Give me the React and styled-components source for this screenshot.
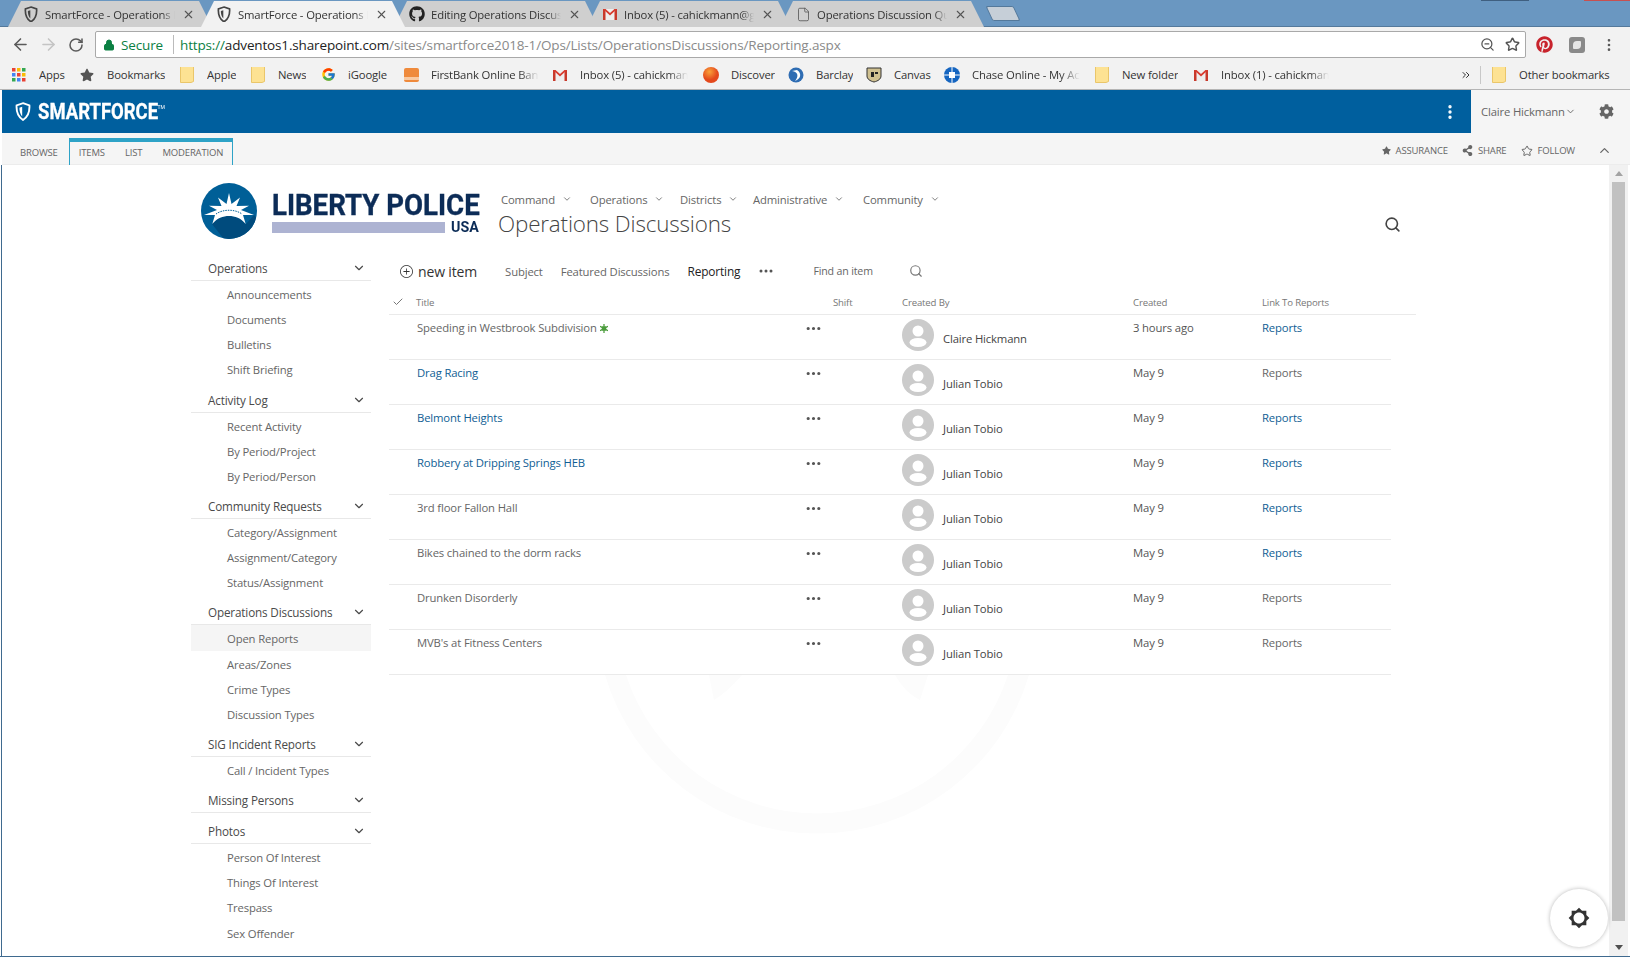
import React from 'react';
import styled, { createGlobalStyle } from 'styled-components';
import { ArrowLeft, ArrowRight, RotateCw, Star, ZoomOut, MoreVertical, Search, ChevronDown, ChevronUp, Check, Lock, X, ChevronsRight, File } from 'lucide-react';
import { FaCog, FaStar, FaPinterest, FaGithub, FaShareAlt } from 'react-icons/fa';
import { FcGoogle } from 'react-icons/fc';
import { BsThreeDots, BsPlusCircle } from 'react-icons/bs';

const UI = '"Open Sans", "Noto Sans", sans-serif';

const Global = createGlobalStyle`
	html, body { margin: 0; padding: 0; background: #fff; }
	body { font-family: ${UI}; letter-spacing: -0.15px; overflow: hidden; }
	* { box-sizing: border-box; }
`;

const Page = styled.div`
	width: 1630px;
	height: 957px;
	display: flex;
	flex-direction: column;
	overflow: hidden;
	position: relative;
	border-bottom: 1px solid #3f6a8f;
`;

/* browser chrome */
const TabStrip = styled.div`
	height: 27px;
	flex: none;
	background: #6a97c1;
	display: flex;
	align-items: flex-end;
	padding-left: 8px;
	border-bottom: 1px solid #54799b;
	position: relative;
`;
const Tab = styled.div`
	width: 204px;
	height: 26px;
	margin-left: -11px;
	&:first-child { margin-left: 0; }
	flex: none;
	display: flex;
	align-items: center;
	padding: 0 0 0 15px;
	position: relative;
	z-index: ${p => (p.$active ? 2 : 1)};
	background: ${p => (p.$active ? '#f2f2f2' : '#cfcfcf')};
	clip-path: polygon(13px 0, calc(100% - 13px) 0, 100% 100%, 0 100%);
	color: #333;
	margin-bottom: -1px;
`;
const TabIcon = styled.span`
	width: 16px;
	height: 16px;
	flex: none;
	display: flex;
	align-items: center;
	justify-content: center;
`;
const TabTitle = styled.span`
	width: 130px;
	margin-left: 6px;
	font-size: 11.3px;
	white-space: nowrap;
	overflow: hidden;
	-webkit-mask-image: linear-gradient(to right, #000 90%, transparent);
	mask-image: linear-gradient(to right, #000 90%, transparent);
`;
const TabClose = styled(X)`
	margin-left: 7px;
	color: #555;
	flex: none;
`;
const NewTab = styled.div`
	width: 28px;
	height: 15px;
	margin: 0 0 5px 5px;
	background: #c6cfd8;
	border: 1px solid #54799b;
	border-radius: 2px;
	transform: skewX(25deg);
	flex: none;
`;
const WindowEdge = styled.div`
	position: absolute;
	top: 0;
	left: ${p => p.$left}px;
	width: ${p => p.$w}px;
	height: 1px;
	background: ${p => p.$color};
`;
const Toolbar = styled.div`
	height: 35px;
	flex: none;
	background: #f2f2f2;
	display: flex;
	align-items: center;
	padding-left: 6px;
	color: #5a5a5a;
`;
const NavButton = styled.span`
	width: 28px;
	display: flex;
	justify-content: center;
	color: ${p => (p.$off ? '#c4c4c4' : '#5a5a5a')};
`;
const AddressBar = styled.div`
	width: 1431px;
	height: 27px;
	margin-left: 5px;
	background: #fff;
	border: 1px solid #a9a9a9;
	border-radius: 2px;
	display: flex;
	align-items: center;
	padding: 0 5px 0 7px;
	font-size: 13.5px;
`;
const Secure = styled.span`
	display: flex;
	align-items: center;
	gap: 6px;
	color: #0b8043;
	width: 71px;
	border-right: 1px solid #bbb;
	height: 19px;
	flex: none;
`;
const Url = styled.span`
	margin-left: 6px;
	color: #8a8a8a;
	flex: 1;
	white-space: nowrap;
	b { font-weight: 400; color: #222; }
	i { font-style: normal; color: #0b8043; }
`;
const AddressIcons = styled.span`
	display: flex;
	gap: 10px;
	align-items: center;
	color: #555;
`;
const ExtIcons = styled.div`
	display: flex;
	align-items: center;
	margin-left: 10px;
	gap: 16px;
`;
const ExtBadge = styled.span`
	width: 16px;
	height: 16px;
	border-radius: 3px;
	background: #8a8a8a;
	display: flex;
	align-items: center;
	justify-content: center;
	&::after {
		content: '';
		width: 8px;
		height: 8px;
		background: #e6e6e6;
		border-radius: 4px 1px 4px 1px;
	}
`;
const Bookmarks = styled.div`
	height: 28px;
	flex: none;
	background: #f2f2f2;
	border-bottom: 1px solid #b5b5b5;
	display: flex;
	align-items: center;
	padding: 0 0 2px 11px;
	font-size: 11.3px;
	color: #333;
	position: relative;
`;
const Bookmark = styled.div`
	width: ${p => p.$w}px;
	flex: none;
	display: flex;
	align-items: center;
	gap: 12px;
	white-space: nowrap;
	overflow: hidden;
`;
const BookmarkIcon = styled.span`
	width: 16px;
	height: 16px;
	flex: none;
	display: flex;
	align-items: center;
	justify-content: center;
`;
const BookmarkLabel = styled.span`
	max-width: ${p => p.$max || 200}px;
	overflow: hidden;
	${p => p.$fade && `
		-webkit-mask-image: linear-gradient(to right, #000 82%, transparent);
		mask-image: linear-gradient(to right, #000 82%, transparent);
	`}
`;
const OtherBookmarks = styled.div`
	margin-left: auto;
	display: flex;
	align-items: center;
	padding-right: 18px;
`;
const Divider = styled.span`
	width: 1px;
	height: 18px;
	background: #c8c8c8;
	margin: 0 10px 0 8px;
`;

/* sharepoint suite bar */
const SuiteBar = styled.div`
	height: 43px;
	flex: none;
	display: flex;
	margin-left: 2px;
	background: #005f9e;
`;
const Brand = styled.div`
	flex: 1;
	display: flex;
	align-items: center;
	padding-left: 13px;
	gap: 7px;
	color: #fff;
`;
const BrandName = styled.span`
	font-family: "Roboto", sans-serif;
	font-weight: 700;
	font-size: 22px;
	letter-spacing: 0;
	-webkit-text-stroke: 0.3px #fff;
	transform: scaleX(0.84);
	transform-origin: left center;
	position: relative;
	sup { font-size: 6px; position: absolute; top: 4px; right: -8px; font-weight: 400; -webkit-text-stroke: 0; }
`;
const SuiteDots = styled.span`
	width: 42px;
	display: flex;
	align-items: center;
	justify-content: center;
	color: #fff;
`;
const SuiteBrandArea = styled.div`
	display: flex;
	flex: 1;
	align-items: center;
`;
const UserArea = styled.div`
	width: 159px;
	background: #f5f5f5;
	display: flex;
	align-items: center;
	padding-left: 10px;
	font-size: 11.3px;
	color: #666;
`;
const UserGear = styled(FaCog)`
	margin-left: 23px;
	color: #666;
`;

const Ribbon = styled.div`
	height: 32px;
	flex: none;
	background: #f5f5f5;
	border-bottom: 1px solid #ececec;
	margin-left: 2px;
	display: flex;
	align-items: flex-end;
	padding-left: 18px;
	font-size: 9.5px;
	color: #666;
`;
const RibbonLabel = styled.span`
	text-transform: uppercase;
	height: 27px;
	padding-top: 3px;
	display: flex;
	align-items: center;
	margin-right: ${p => p.$mr || 0}px;
`;
const RibbonActive = styled.div`
	display: flex;
	height: 27px;
	padding: 0 9px;
	margin: 0 0 -1px 11px;
	border: 1px solid #2ea3c7;
	border-top: 4px solid #2ea3c7;
	border-bottom: 0;
	span { height: 20px; padding-top: 0; }
`;
const RibbonRight = styled.div`
	margin-left: auto;
	display: flex;
	align-items: center;
	height: 100%;
	padding: 4px 18px 0 0;
`;
const RibbonAction = styled.span`
	display: flex;
	align-items: center;
	gap: 5px;
	margin-right: 14px;
	text-transform: uppercase;
	color: #666;
`;
const RibbonCollapse = styled(ChevronUp)`
	margin-left: 8px;
`;

/* page body */
const Body = styled.div`
	flex: 1;
	display: flex;
	min-height: 0;
	margin-left: 1px;
	border-left: 1px solid #3f6a8f;
`;
const Content = styled.div`
	flex: 1;
	padding-left: 189px;
	position: relative;
	overflow: hidden;
`;
const SiteHeader = styled.div`
	height: 85px;
	display: flex;
	padding-top: 18px;
`;
const LibertyLogo = styled.div`
	width: 305px;
	height: 56px;
	margin-left: 10px;
	display: flex;
	align-items: center;
	gap: 15px;
	flex: none;
	margin-right: -8px;
`;
const LogoText = styled.div`
	font-family: "Roboto", sans-serif;
	font-weight: 700;
	color: #0c2c57;
	width: 207px;
	letter-spacing: 0;
`;
const LogoName = styled.div`
	font-size: 30px;
	line-height: 32px;
	white-space: nowrap;
	width: 225px;
	-webkit-text-stroke: 0.4px #0c2c57;
	transform: scaleX(0.92);
	transform-origin: left center;
`;
const LogoLower = styled.div`
	display: flex;
	align-items: center;
	gap: 6px;
	font-size: 15px;
	line-height: 13px;
`;
const LogoBar = styled.span`
	flex: 1;
	height: 11px;
	background: #adb3d2;
`;
const LogoUsa = styled.span`
	width: 28px;
	transform: scaleX(0.95);
	transform-origin: left center;
`;
const SiteTitles = styled.div`
	flex: 1;
	padding-top: 6px;
`;
const TopNav = styled.div`
	display: flex;
	height: 20px;
	padding-left: 3px;
	align-items: center;
	font-size: 11.3px;
	color: #666;
`;
const TopNavItem = styled.span`
	width: ${p => p.$w}px;
	display: flex;
	align-items: center;
	gap: 7px;
`;
const PageTitle = styled.h1`
	margin: 0;
	font-size: 22.4px;
	font-weight: 300;
	line-height: 30px;
	color: #444;
`;
const SiteSearch = styled(Search)`
	margin: 33px 208px 0 0;
	color: #444;
	flex: none;
`;
const Columns = styled.div`
	display: flex;
`;
const Sidebar = styled.nav`
	width: 180px;
	flex: none;
	font-size: 11.3px;
	color: #666;
`;
const GroupHeader = styled.div`
	height: 31px;
	border-bottom: 1px solid #e8e8e8;
	display: flex;
	align-items: center;
	justify-content: space-between;
	padding: 6px 5px 0 17px;
	font-size: 11.7px;
	font-weight: 500;
	color: #4a4a4a;
`;
const NavItem = styled.div`
	height: 25.15px;
	padding: 2px 0 0 36px;
	display: flex;
	align-items: center;
	background: ${p => (p.$selected ? '#f5f5f5' : 'transparent')};
`;
const Main = styled.main`
	margin-left: 18px;
	width: 1027px;
	position: relative;
`;
const ListToolbar = styled.div`
	height: 40px;
	padding-top: 2px;
	display: flex;
	align-items: center;
	font-size: 11.3px;
	color: #666;
`;
const NewItem = styled.span`
	display: flex;
	align-items: center;
	gap: 5px;
	font-size: 14px;
	font-weight: 500;
	color: #333;
	margin: 0 28px 0 11px;
`;
const ViewLink = styled.span`
	margin-right: ${p => (p.$current ? 19 : 18)}px;
	font-size: ${p => (p.$current ? 11.9 : 11.3)}px;
	font-weight: ${p => (p.$current ? 500 : 400)};
	color: ${p => (p.$current ? '#222' : '#666')};
`;
const MoreViews = styled(BsThreeDots)`
	color: #555;
	margin: 0 39px 0 -1px;
`;
const FindItem = styled.span`
	font-size: 10.6px;
	width: 96px;
`;
const FindIcon = styled(Search)`
	color: #777;
`;
const TableHeader = styled.div`
	display: grid;
	grid-template-columns: 27px 387px 30px 69px 231px 129px 129px 25px;
	height: 25px;
	align-items: center;
	border-bottom: 1px solid #eaeaea;
	font-size: 9.6px;
	color: #777;
`;
const Row = styled.div`
	display: grid;
	grid-template-columns: 27px 387px 30px 69px 231px 129px 129px;
	width: 1002px;
	height: 45px;
	padding-top: 4px;
	border-bottom: 1px solid #eaeaea;
	font-size: 11.3px;
	line-height: 17px;
	color: #666;
	background: #fff;
`;
const RowTitle = styled.span`
	grid-column: 2;
	padding-left: 1px;
	color: ${p => (p.$link ? '#0f5e94' : '#666')};
	display: flex;
	align-items: flex-start;
	gap: 3px;
`;
const RowDots = styled.span`
	grid-column: 3;
	margin-left: 2px;
	color: #555;
	display: flex;
	height: 19px;
	align-items: center;
`;
const Person = styled.span`
	grid-column: 5;
	display: flex;
	gap: 9px;
	color: #444;
`;
const PersonName = styled.span`
	padding-top: 11px;
`;
const CreatedCell = styled.span`
	color: #555;
`;
const ReportLink = styled.span`
	color: ${p => (p.$link ? '#0f5e94' : '#666')};
`;
const Watermark = styled.svg`
	position: absolute;
	left: 602px;
	top: 510px;
	width: 426px;
	height: 160px;
`;
const FloatButton = styled.div`
	position: absolute;
	right: 22px;
	bottom: 9px;
	width: 58px;
	height: 58px;
	border-radius: 50%;
	background: #fff;
	box-shadow: 0 0 4px rgba(0, 0, 0, 0.28);
	display: flex;
	align-items: center;
	justify-content: center;
	z-index: 5;
`;
const Scrollbar = styled.div`
	width: 21px;
	flex: none;
	background: #f1f1f1;
	display: flex;
	flex-direction: column;
	align-items: center;
	border-right: 2px solid #fff;
`;
const ScrollArrow = styled.span`
	height: 17px;
	flex: none;
	display: flex;
	align-items: center;
	&::after {
		content: '';
		border-left: 4px solid transparent;
		border-right: 4px solid transparent;
		${p => (p.$up ? 'border-bottom: 5px solid #a3a3a3;' : 'border-top: 5px solid #505050;')}
	}
`;
const ScrollThumb = styled.span`
	width: 13px;
	height: 739px;
	background: #c1c1c1;
	margin-bottom: auto;
`;

function Shield({ size = 14, color = '#fff' }) {
	return (
		<svg width={size} height={size * 1.2} viewBox="0 0 20 24">
			<path d="M10 1.500 L18 4.200 C18.500 12 16.500 18.500 10 22.500 C3.500 18.500 1.500 12 2 4.200 Z" fill="none" stroke={color} strokeWidth="2.400" />
			<path d="M9 6 L9 18 C6.500 15.500 5.500 11.500 5.500 7.200 Z" fill={color} />
		</svg>
	);
}

function Gmail({ size = 16 }) {
	return (
		<svg width={size} height={size} viewBox="0 0 16 16">
			<path d="M1 3h14v11H1z" fill="#eee" />
			<path d="M1 3h2.500v11H1zM12.500 3H15v11h-2.500z" fill="#c8392b" />
			<path d="M1 3h2.500L8 7l4.500-4H15L8 9.500z" fill="#d93c2f" />
		</svg>
	);
}

function Folder() {
	return (
		<svg width="14" height="17" viewBox="0 0 14 17">
			<path d="M.5.500h13v15l-2.500 1h-10.500z" fill="#fde293" stroke="#eac66a" />
		</svg>
	);
}

function AppsGrid() {
	const colors = ['#e94235', '#fbbc04', '#34a853', '#4285f4', '#e94235', '#fbbc04', '#34a853', '#4285f4', '#e94235'];
	return (
		<svg width="14" height="14" viewBox="0 0 14 14">
			{colors.map((c, i) => (
				<rect key={i} x={(i % 3) * 5} y={Math.floor(i / 3) * 5} width="3.500" height="3.500" fill={c} />
			))}
		</svg>
	);
}

function LibertyMark() {
	return (
		<svg width="56" height="56" viewBox="0 0 56 56">
			<clipPath id="liberty-disc"><circle cx="28" cy="28" r="28" /></clipPath>
			<circle cx="28" cy="28" r="28" fill="#005f97" />
			<path d="M11 41 C16 35 22 33 28 33 C34 33 40 35 45 41 L53 32 L60 40 L44 60 L26 60 Z" fill="#004b7d" clipPath="url(#liberty-disc)" />
			<path d="M28 10 L30.500 21 L39 14.500 L35.500 23 L48 22.700 L40 27 L53 32 L42 32 L44.700 41 C40 35 34 33 28 33 C22 33 16 35 11.300 41 L14 32 L3 32 L16 27 L8 22.700 L20.500 23 L17 14.500 L25.500 21 Z" fill="#fff" />
			<path d="M15 31 C22 26 34 26 41 31" stroke="#005f97" strokeWidth="1" strokeDasharray="1.500 1" fill="none" />
		</svg>
	);
}

function NewBadge() {
	return (
		<svg width="8" height="9" viewBox="0 0 9 10" style={{ marginTop: 5 }}>
			<path d="M4.500 0v10M0 2.500l9 5M9 2.500l-9 5" stroke="#4b9c3c" strokeWidth="1.400" />
			<rect x="2" y="2.500" width="5" height="5" fill="#4b9c3c" />
		</svg>
	);
}

function Avatar() {
	return (
		<svg width="32" height="32" viewBox="0 0 32 32">
			<circle cx="16" cy="16" r="16" fill="#cbcbcb" />
			<circle cx="16" cy="12" r="5.500" fill="#fff" />
			<ellipse cx="16" cy="23.500" rx="8.500" ry="4.500" fill="#fff" />
		</svg>
	);
}

const tabs = [
	{ title: 'SmartForce - Operations Discussions', icon: <Shield size={14} color="#444" /> },
	{ title: 'SmartForce - Operations Discussions', icon: <Shield size={14} color="#444" />, active: true },
	{ title: 'Editing Operations Discussions', icon: <FaGithub size={16} color="#222" /> },
	{ title: 'Inbox (5) - cahickmann@gmail.com', icon: <Gmail /> },
	{ title: 'Operations Discussion Queue', icon: <File size={15} strokeWidth={1.3} color="#555" /> },
];

const bookmarks = [
	{ w: 68, label: 'Apps', icon: <AppsGrid /> },
	{ w: 100, label: 'Bookmarks', icon: <FaStar size={14} color="#555" /> },
	{ w: 71, label: 'Apple', icon: <Folder /> },
	{ w: 70, label: 'News', icon: <Folder /> },
	{ w: 83, label: 'iGoogle', icon: <FcGoogle size={15} /> },
	{ w: 149, label: 'FirstBank Online Banking', max: 108, icon: <svg width="15" height="16"><rect y="1" width="15" height="14" rx="2" fill="#ef8a3c" /><rect y="10" width="15" height="3" fill="#f9c9a0" /></svg> },
	{ w: 151, label: 'Inbox (5) - cahickmann', max: 108, icon: <Gmail /> },
	{ w: 85, label: 'Discover', icon: <svg width="16" height="16"><defs><radialGradient id="disc" cx="0.400" cy="0.300"><stop offset="0" stopColor="#f9a13a" /><stop offset="1" stopColor="#e4491c" /></radialGradient></defs><circle cx="8" cy="8" r="8" fill="url(#disc)" /></svg> },
	{ w: 78, label: 'Barclay', icon: <svg width="16" height="16"><circle cx="8" cy="8" r="7.500" fill="#2f6db3" /><path d="M4 4c6 1 7 5 3 10c6-2 7-8 2-11z" fill="#fff" /></svg> },
	{ w: 78, label: 'Canvas', icon: <svg width="16" height="16"><path d="M1 1h14v8c0 3-3 5-7 6c-4-1-7-3-7-6z" fill="#cfc090" stroke="#333" /><path d="M5 5h3v5h-3zM9 5h3v2h-3z" fill="#222" /></svg> },
	{ w: 150, label: 'Chase Online - My Accounts', max: 108, icon: <svg width="16" height="16"><circle cx="8" cy="8" r="8" fill="#1565c0" /><rect x="5" y="5" width="6" height="6" fill="#fff" /><path d="M8 0v5M8 11v5M0 8h5M11 8h5" stroke="#fff" strokeWidth="1" /></svg> },
	{ w: 99, label: 'New folder', icon: <Folder /> },
	{ w: 140, label: 'Inbox (1) - cahickmann', max: 108, icon: <Gmail /> },
];

const nav = [
	{ title: 'Operations', items: ['Announcements', 'Documents', 'Bulletins', 'Shift Briefing'] },
	{ title: 'Activity Log', items: ['Recent Activity', 'By Period/Project', 'By Period/Person'] },
	{ title: 'Community Requests', items: ['Category/Assignment', 'Assignment/Category', 'Status/Assignment'] },
	{ title: 'Operations Discussions', items: ['Open Reports', 'Areas/Zones', 'Crime Types', 'Discussion Types'] },
	{ title: 'SIG Incident Reports', items: ['Call / Incident Types'] },
	{ title: 'Missing Persons', items: [] },
	{ title: 'Photos', items: ['Person Of Interest', 'Things Of Interest', 'Trespass', 'Sex Offender'] },
];

const topNav = [
	{ label: 'Command', w: 89 },
	{ label: 'Operations', w: 90 },
	{ label: 'Districts', w: 73 },
	{ label: 'Administrative', w: 110 },
	{ label: 'Community', w: 100 },
];

const rows = [
	{ title: 'Speeding in Westbrook Subdivision', isNew: true, by: 'Claire Hickmann', created: '3 hours ago', report: true },
	{ title: 'Drag Racing', link: true, by: 'Julian Tobio', created: 'May 9' },
	{ title: 'Belmont Heights', link: true, by: 'Julian Tobio', created: 'May 9', report: true },
	{ title: 'Robbery at Dripping Springs HEB', link: true, by: 'Julian Tobio', created: 'May 9', report: true },
	{ title: '3rd floor Fallon Hall', by: 'Julian Tobio', created: 'May 9', report: true },
	{ title: 'Bikes chained to the dorm racks', by: 'Julian Tobio', created: 'May 9', report: true },
	{ title: 'Drunken Disorderly', by: 'Julian Tobio', created: 'May 9' },
	{ title: "MVB's at Fitness Centers", by: 'Julian Tobio', created: 'May 9' },
];

export default function App() {
	return (
		<Page>
			<Global />
			<TabStrip>
				{tabs.map((t, i) => (
					<Tab key={i} $active={t.active}>
						<TabIcon>{t.icon}</TabIcon>
						<TabTitle>{t.title}</TabTitle>
						<TabClose size={13} />
					</Tab>
				))}
				<NewTab />
				<WindowEdge $left={1481} $w={48} $color="#3f5f80" />
				<WindowEdge $left={1584} $w={46} $color="#c75050" />
			</TabStrip>
			<Toolbar>
				<NavButton><ArrowLeft size={19} /></NavButton>
				<NavButton $off><ArrowRight size={19} /></NavButton>
				<NavButton><RotateCw size={16} strokeWidth={2.300} /></NavButton>
				<AddressBar>
					<Secure><Lock size={12} fill="#0b8043" /> Secure</Secure>
					<Url><i>https://</i><b>adventos1.sharepoint.com</b>/sites/smartforce2018-1/Ops/Lists/OperationsDiscussions/Reporting.aspx</Url>
					<AddressIcons>
						<ZoomOut size={15} />
						<Star size={15} strokeWidth={2.300} />
					</AddressIcons>
				</AddressBar>
				<ExtIcons>
					<FaPinterest size={17} color="#c8232c" />
					<ExtBadge />
					<MoreVertical size={16} />
				</ExtIcons>
			</Toolbar>
			<Bookmarks>
				{bookmarks.map((b, i) => (
					<Bookmark key={i} $w={b.w}>
						<BookmarkIcon>{b.icon}</BookmarkIcon>
						<BookmarkLabel $max={b.max} $fade={!!b.max}>{b.label}</BookmarkLabel>
					</Bookmark>
				))}
				<OtherBookmarks>
					<ChevronsRight size={12} />
					<Divider />
					<Bookmark $w={121}>
						<BookmarkIcon><Folder /></BookmarkIcon>
						<BookmarkLabel>Other bookmarks</BookmarkLabel>
					</Bookmark>
				</OtherBookmarks>
			</Bookmarks>
			<SuiteBar>
				<SuiteBrandArea>
					<Brand>
						<Shield size={16} color="#fff" />
						<BrandName>SMARTFORCE<sup>TM</sup></BrandName>
					</Brand>
					<SuiteDots><MoreVertical size={18} strokeWidth={2.500} /></SuiteDots>
				</SuiteBrandArea>
				<UserArea>
					Claire Hickmann
					<ChevronDown size={11} />
					<UserGear size={15} />
				</UserArea>
			</SuiteBar>
			<Ribbon>
				<RibbonLabel>Browse</RibbonLabel>
				<RibbonActive>
					<RibbonLabel $mr={20}>Items</RibbonLabel>
					<RibbonLabel $mr={20}>List</RibbonLabel>
					<RibbonLabel>Moderation</RibbonLabel>
				</RibbonActive>
				<RibbonRight>
					<RibbonAction><FaStar size={9} /> Assurance</RibbonAction>
					<RibbonAction><FaShareAlt size={11} /> Share</RibbonAction>
					<RibbonAction><Star size={12} /> Follow</RibbonAction>
					<RibbonCollapse size={15} />
				</RibbonRight>
			</Ribbon>
			<Body>
				<Content>
					<Watermark viewBox="0 0 426 160">
						<path d="M1 0 A221 221 0 0 0 425 0 L404 0 A201 201 0 0 1 22 0 Z" fill="#fcfcfc" />
						<path d="M105 0 L138 0 C128 12 118 20 110 25 Z M291 0 L324 0 L316 25 C306 20 298 12 291 0 Z" fill="#fcfcfc" />
					</Watermark>
					<SiteHeader>
						<LibertyLogo>
							<LibertyMark />
							<LogoText>
								<LogoName>LIBERTY POLICE</LogoName>
								<LogoLower><LogoBar /><LogoUsa>USA</LogoUsa></LogoLower>
							</LogoText>
						</LibertyLogo>
						<SiteTitles>
							<TopNav>
								{topNav.map(n => (
									<TopNavItem key={n.label} $w={n.w}>
										{n.label}
										<ChevronDown size={10} />
									</TopNavItem>
								))}
							</TopNav>
							<PageTitle>Operations Discussions</PageTitle>
						</SiteTitles>
						<SiteSearch size={17} strokeWidth={2.300} />
					</SiteHeader>
					<Columns>
						<Sidebar>
							{nav.map(g => (
								<div key={g.title}>
									<GroupHeader>
										{g.title}
										<ChevronDown size={14} />
									</GroupHeader>
									{g.items.map(i => (
										<NavItem key={i} $selected={i === 'Open Reports'}>{i}</NavItem>
									))}
								</div>
							))}
						</Sidebar>
						<Main>
							<ListToolbar>
								<NewItem><BsPlusCircle size={13} /> new item</NewItem>
								<ViewLink>Subject</ViewLink>
								<ViewLink>Featured Discussions</ViewLink>
								<ViewLink $current>Reporting</ViewLink>
								<MoreViews size={16} />
								<FindItem>Find an item</FindItem>
								<FindIcon size={14} />
							</ListToolbar>
							<TableHeader>
								<Check size={12} style={{ marginLeft: 3 }} />
								<span>Title</span>
								<span />
								<span>Shift</span>
								<span>Created By</span>
								<span>Created</span>
								<span>Link To Reports</span>
							</TableHeader>
							{rows.map(r => (
								<Row key={r.title}>
									<RowTitle $link={r.link}>{r.title}{r.isNew && <NewBadge />}</RowTitle>
									<RowDots><BsThreeDots size={17} /></RowDots>
									<Person>
										<Avatar />
										<PersonName>{r.by}</PersonName>
									</Person>
									<CreatedCell>{r.created}</CreatedCell>
									<ReportLink $link={r.report}>Reports</ReportLink>
								</Row>
							))}
						</Main>
					</Columns>
				</Content>
				<Scrollbar>
					<ScrollArrow $up />
					<ScrollThumb />
					<ScrollArrow />
				</Scrollbar>
			</Body>
			<FloatButton>
				<svg width="22" height="22" viewBox="0 0 24 24">
					<path d="M20 15.310 23.310 12 20 8.690V4h-4.690L12 .69 8.690 4H4v4.690L.69 12 4 15.310V20h4.690L12 23.310 15.310 20H20v-4.690zM12 18c-3.310 0-6-2.690-6-6s2.690-6 6-6 6 2.690 6 6-2.690 6-6 6z" fill="#333" />
				</svg>
			</FloatButton>
		</Page>
	);
}
